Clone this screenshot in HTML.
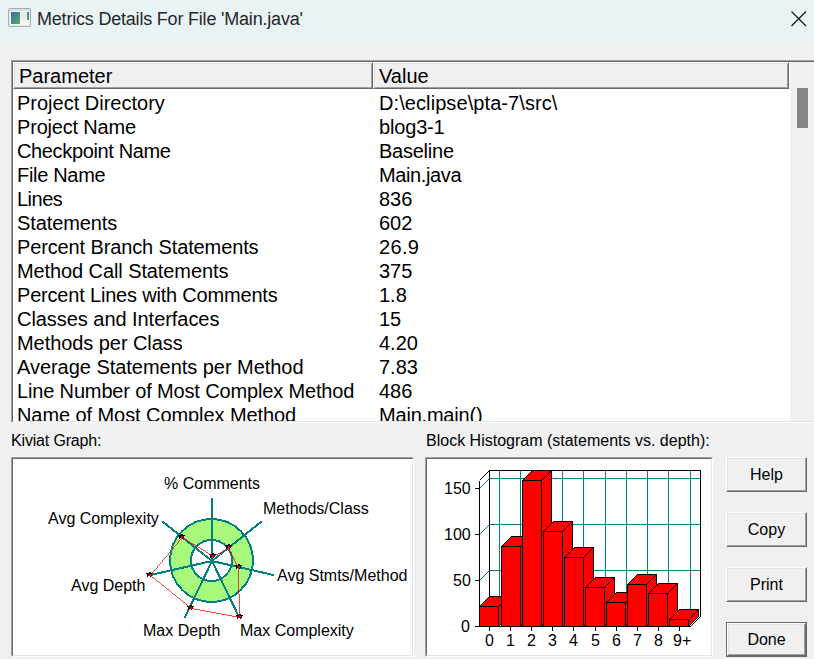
<!DOCTYPE html>
<html><head><meta charset="utf-8">
<style>
html,body{margin:0;padding:0}
body{width:814px;height:659px;overflow:hidden;background:#f0f0f0;position:relative;font-family:"Liberation Sans",sans-serif;color:#000}
.a{position:absolute;white-space:pre}
#title{left:0;top:0;width:814px;height:42px;background:#e9f3f6}
.t20{font-size:20px;line-height:24px}
.t16{font-size:16px;line-height:18px}
.sunk{position:absolute;border:1px solid;border-color:#a0a0a0 #fff #fff #a0a0a0;box-sizing:border-box}
.sunk>.in{position:absolute;left:0;top:0;right:0;bottom:0;border:1px solid;border-color:#696969 #e3e3e3 #e3e3e3 #696969;background:#fff;overflow:hidden}
.btn{position:absolute;box-sizing:border-box;border:1px solid;border-color:#fff #696969 #696969 #fff;background:#f0f0f0}
.btn>.in{position:absolute;left:0;top:0;right:0;bottom:0;border:1px solid;border-color:#e3e3e3 #a0a0a0 #a0a0a0 #e3e3e3}
.btn .lbl{position:absolute;left:0;right:0;text-align:center;font-size:16px;line-height:18px}
.hdr{position:absolute;top:0;height:27px;box-sizing:border-box;border:1px solid;border-color:#fff #696969 #696969 #fff;background:#f0f0f0}
.hdr>.in{position:absolute;left:0;top:0;right:0;bottom:0;border:1px solid;border-color:#e3e3e3 #a0a0a0 #a0a0a0 #e3e3e3}
</style></head><body>
<div id="title" class="a">
  <svg class="a" style="left:0;top:0" width="814" height="42">
    <defs>
      <linearGradient id="ig" x1="0" y1="0" x2="1" y2="1">
        <stop offset="0" stop-color="#3a68b0"/><stop offset="1" stop-color="#55b060"/>
      </linearGradient>
      <linearGradient id="ig2" x1="0" y1="0" x2="0" y2="1">
        <stop offset="0" stop-color="#3b7fc4"/><stop offset="1" stop-color="#3fae5a"/>
      </linearGradient>
    </defs>
    <rect x="8.5" y="8.5" width="22" height="18" rx="1.5" fill="#eeeeee" stroke="#a4abb3"/>
    <rect x="9" y="9" width="21" height="2" fill="#d9dee5"/>
    <rect x="10" y="11" width="19" height="14" fill="#f4f4f4"/>
    <rect x="11" y="12" width="9" height="12" fill="url(#ig)"/>
    <rect x="21" y="12" width="5" height="7" fill="#e8e8e8"/>
    <rect x="27" y="12" width="2" height="8" fill="url(#ig2)"/>
    <path d="M791.5 11.5 L806 26 M806 11.5 L791.5 26" stroke="#1a1a1a" stroke-width="1.3" fill="none"/>
  </svg>
  <div class="a" style="left:37px;top:8px;font-size:18px;line-height:22px;letter-spacing:-0.2px;color:#262626">Metrics Details For File 'Main.java'</div>
</div>

<!-- list box -->
<div class="sunk" style="left:11px;top:60px;width:830px;height:363px">
  <div class="in">
    <div class="hdr" style="left:0;width:360px"><div class="in"></div></div>
    <div class="hdr" style="left:360px;width:416px"><div class="in"></div></div>
    <div class="a t20" style="left:6px;top:2px">Parameter</div>
    <div class="a t20" style="left:366px;top:2px">Value</div>
    <div style="position:absolute;left:777px;top:0;width:60px;height:400px;background:#f0f0f0"></div>
    <div style="position:absolute;left:784px;top:26px;width:11px;height:40px;background:#858585"></div>
    <div class="a t20" style="left:4px;top:29px">Project Directory</div><div class="a t20" style="left:366px;top:29px;letter-spacing:0.085px">D:\eclipse\pta-7\src\</div>
    <div class="a t20" style="left:4px;top:53px;letter-spacing:-0.182px">Project Name</div><div class="a t20" style="left:366px;top:53px;letter-spacing:-0.167px">blog3-1</div>
    <div class="a t20" style="left:4px;top:77px;letter-spacing:-0.357px">Checkpoint Name</div><div class="a t20" style="left:366px;top:77px;letter-spacing:-0.243px">Baseline</div>
    <div class="a t20" style="left:4px;top:101px;letter-spacing:-0.312px">File Name</div><div class="a t20" style="left:366px;top:101px;letter-spacing:-0.375px">Main.java</div>
    <div class="a t20" style="left:4px;top:125px;letter-spacing:-0.500px">Lines</div><div class="a t20" style="left:366px;top:125px">836</div>
    <div class="a t20" style="left:4px;top:149px;letter-spacing:-0.111px">Statements</div><div class="a t20" style="left:366px;top:149px">602</div>
    <div class="a t20" style="left:4px;top:173px;letter-spacing:-0.125px">Percent Branch Statements</div><div class="a t20" style="left:366px;top:173px;letter-spacing:0.333px">26.9</div>
    <div class="a t20" style="left:4px;top:197px;letter-spacing:-0.095px">Method Call Statements</div><div class="a t20" style="left:366px;top:197px">375</div>
    <div class="a t20" style="left:4px;top:221px;letter-spacing:-0.192px">Percent Lines with Comments</div><div class="a t20" style="left:366px;top:221px">1.8</div>
    <div class="a t20" style="left:4px;top:245px;letter-spacing:-0.048px">Classes and Interfaces</div><div class="a t20" style="left:366px;top:245px">15</div>
    <div class="a t20" style="left:4px;top:269px;letter-spacing:-0.062px">Methods per Class</div><div class="a t20" style="left:366px;top:269px">4.20</div>
    <div class="a t20" style="left:4px;top:293px;letter-spacing:-0.036px">Average Statements per Method</div><div class="a t20" style="left:366px;top:293px">7.83</div>
    <div class="a t20" style="left:4px;top:317px;letter-spacing:-0.152px">Line Number of Most Complex Method</div><div class="a t20" style="left:366px;top:317px">486</div>
    <div class="a t20" style="left:4px;top:341px;letter-spacing:-0.077px">Name of Most Complex Method</div><div class="a t20" style="left:366px;top:341px;letter-spacing:-0.200px">Main.main()</div>
  </div>
</div>

<div class="a t16" style="left:11px;top:432px;letter-spacing:-0.17px">Kiviat Graph:</div>
<div class="a t16" style="left:426px;top:432px">Block Histogram (statements vs. depth):</div>

<div class="sunk" style="left:11px;top:457px;width:403px;height:200px"><div class="in"></div></div>
<div class="sunk" style="left:425px;top:457px;width:288px;height:200px"><div class="in"></div></div>

<div class="btn" style="left:726px;top:457px;width:81px;height:35px"><div class="in"></div><div class="lbl" style="top:8px">Help</div></div>
<div class="btn" style="left:726px;top:512px;width:81px;height:35px"><div class="in"></div><div class="lbl" style="top:8px">Copy</div></div>
<div class="btn" style="left:726px;top:567px;width:81px;height:35px"><div class="in"></div><div class="lbl" style="top:8px">Print</div></div>
<div class="a" style="left:726px;top:622px;width:81px;height:35px;box-sizing:border-box;border:1px solid #696969">
  <div class="btn" style="left:0;top:0;width:79px;height:33px"><div class="in"></div><div class="lbl" style="top:7px">Done</div></div>
</div>

<svg id="charts" class="a" style="left:0;top:0" width="814" height="659">
<g shape-rendering="crispEdges">
<circle cx="211.5" cy="560.5" r="41.5" fill="#a8f87c" stroke="#008080" stroke-width="2"/>
<circle cx="211.5" cy="560.5" r="20.5" fill="#fff" stroke="#008080" stroke-width="2"/>
<path d="M212 561L212.0 497.5 M212 561L261.6 521.4 M212 561L273.9 575.1 M212 561L239.6 618.2 M212 561L184.4 618.2 M212 561L150.1 575.1 M212 561L162.4 521.4" stroke="#008080" stroke-width="2" fill="none"/>
<path d="M213 553h1v1h2v1h-1v2h-1v1h-1v-1h-2v1h-1v-1h0v-2h-1v-1h2z" fill="#000"/>
<rect x="212" y="555" width="2" height="2" fill="#f00"/>
<path d="M229 544h1v1h2v1h-1v2h-1v1h-1v-1h-2v1h-1v-1h0v-2h-1v-1h2z" fill="#000"/>
<rect x="228" y="546" width="2" height="2" fill="#f00"/>
<path d="M239 564h1v1h2v1h-1v2h-1v1h-1v-1h-2v1h-1v-1h0v-2h-1v-1h2z" fill="#000"/>
<rect x="238" y="566" width="2" height="2" fill="#f00"/>
<path d="M240 614h1v1h2v1h-1v2h-1v1h-1v-1h-2v1h-1v-1h0v-2h-1v-1h2z" fill="#000"/>
<rect x="239" y="616" width="2" height="2" fill="#f00"/>
<path d="M191 605h1v1h2v1h-1v2h-1v1h-1v-1h-2v1h-1v-1h0v-2h-1v-1h2z" fill="#000"/>
<rect x="190" y="607" width="2" height="2" fill="#f00"/>
<path d="M150 572h1v1h2v1h-1v2h-1v1h-1v-1h-2v1h-1v-1h0v-2h-1v-1h2z" fill="#000"/>
<rect x="149" y="574" width="2" height="2" fill="#f00"/>
<path d="M182 534h1v1h2v1h-1v2h-1v1h-1v-1h-2v1h-1v-1h0v-2h-1v-1h2z" fill="#000"/>
<rect x="181" y="536" width="2" height="2" fill="#f00"/>
<polygon points="212.5,556.5 228.5,547.5 238.5,567.5 239.5,617.5 190.5,608.5 149.5,575.5 181.5,537.5" fill="none" stroke="#f00" stroke-width="0.75"/>
</g>
<g shape-rendering="crispEdges" fill="none">
<path d="M489.5 478.5H700.5" stroke="#008080"/>
<path d="M479.5 488.5L489.5 478.5" stroke="#008080"/>
<path d="M489.5 524.5H700.5" stroke="#008080"/>
<path d="M479.5 534.5L489.5 524.5" stroke="#008080"/>
<path d="M489.5 570.5H700.5" stroke="#008080"/>
<path d="M479.5 580.5L489.5 570.5" stroke="#008080"/>
<path d="M499.5 470.5V616.5" stroke="#008080"/>
<path d="M520.5 470.5V616.5" stroke="#008080"/>
<path d="M541.5 470.5V616.5" stroke="#008080"/>
<path d="M562.5 470.5V616.5" stroke="#008080"/>
<path d="M583.5 470.5V616.5" stroke="#008080"/>
<path d="M605.5 470.5V616.5" stroke="#008080"/>
<path d="M626.5 470.5V616.5" stroke="#008080"/>
<path d="M647.5 470.5V616.5" stroke="#008080"/>
<path d="M668.5 470.5V616.5" stroke="#008080"/>
<path d="M690.5 470.5V616.5" stroke="#008080"/>
<path d="M489.5 470.5H700.5V616.5 M489.5 470.5V616.5 M479.5 480.5L489.5 470.5 M479.5 480.5V626.5 M475 626.5H690.5L700.5 616.5" stroke="#000"/>
<path d="M475 488.5H479.5" stroke="#000"/>
<path d="M475 534.5H479.5" stroke="#000"/>
<path d="M475 580.5H479.5" stroke="#000"/>
<path d="M489.5 626.5V631" stroke="#000"/>
<path d="M510.5 626.5V631" stroke="#000"/>
<path d="M531.5 626.5V631" stroke="#000"/>
<path d="M552.5 626.5V631" stroke="#000"/>
<path d="M573.5 626.5V631" stroke="#000"/>
<path d="M595.5 626.5V631" stroke="#000"/>
<path d="M616.5 626.5V631" stroke="#000"/>
<path d="M637.5 626.5V631" stroke="#000"/>
<path d="M658.5 626.5V631" stroke="#000"/>
<path d="M679.5 626.5V631" stroke="#000"/>
<path d="M479.5 606.5L489.5 596.5H508.5L498.5 606.5Z" fill="#f00" stroke="#000"/>
<path d="M498.5 606.5L508.5 596.5V616.5L498.5 626.5Z" fill="#f00" stroke="#000"/>
<rect x="479.5" y="606.5" width="19" height="20" fill="#f00" stroke="#000"/>
<path d="M501.5 546.5L511.5 536.5H530.5L520.5 546.5Z" fill="#f00" stroke="#000"/>
<path d="M520.5 546.5L530.5 536.5V616.5L520.5 626.5Z" fill="#f00" stroke="#000"/>
<rect x="501.5" y="546.5" width="19" height="80" fill="#f00" stroke="#000"/>
<path d="M522.5 480.5L532.5 470.5H551.5L541.5 480.5Z" fill="#f00" stroke="#000"/>
<path d="M541.5 480.5L551.5 470.5V616.5L541.5 626.5Z" fill="#f00" stroke="#000"/>
<rect x="522.5" y="480.5" width="19" height="146" fill="#f00" stroke="#000"/>
<path d="M543.5 531.5L553.5 521.5H572.5L562.5 531.5Z" fill="#f00" stroke="#000"/>
<path d="M562.5 531.5L572.5 521.5V616.5L562.5 626.5Z" fill="#f00" stroke="#000"/>
<rect x="543.5" y="531.5" width="19" height="95" fill="#f00" stroke="#000"/>
<path d="M564.5 557.5L574.5 547.5H593.5L583.5 557.5Z" fill="#f00" stroke="#000"/>
<path d="M583.5 557.5L593.5 547.5V616.5L583.5 626.5Z" fill="#f00" stroke="#000"/>
<rect x="564.5" y="557.5" width="19" height="69" fill="#f00" stroke="#000"/>
<path d="M585.5 587.5L595.5 577.5H614.5L604.5 587.5Z" fill="#f00" stroke="#000"/>
<path d="M604.5 587.5L614.5 577.5V616.5L604.5 626.5Z" fill="#f00" stroke="#000"/>
<rect x="585.5" y="587.5" width="19" height="39" fill="#f00" stroke="#000"/>
<path d="M606.5 602.5L616.5 592.5H635.5L625.5 602.5Z" fill="#f00" stroke="#000"/>
<path d="M625.5 602.5L635.5 592.5V616.5L625.5 626.5Z" fill="#f00" stroke="#000"/>
<rect x="606.5" y="602.5" width="19" height="24" fill="#f00" stroke="#000"/>
<path d="M627.5 584.5L637.5 574.5H656.5L646.5 584.5Z" fill="#f00" stroke="#000"/>
<path d="M646.5 584.5L656.5 574.5V616.5L646.5 626.5Z" fill="#f00" stroke="#000"/>
<rect x="627.5" y="584.5" width="19" height="42" fill="#f00" stroke="#000"/>
<path d="M648.5 593.5L658.5 583.5H677.5L667.5 593.5Z" fill="#f00" stroke="#000"/>
<path d="M667.5 593.5L677.5 583.5V616.5L667.5 626.5Z" fill="#f00" stroke="#000"/>
<rect x="648.5" y="593.5" width="19" height="33" fill="#f00" stroke="#000"/>
<path d="M669.5 619.5L679.5 609.5H698.5L688.5 619.5Z" fill="#f00" stroke="#000"/>
<path d="M688.5 619.5L698.5 609.5V616.5L688.5 626.5Z" fill="#f00" stroke="#000"/>
<rect x="669.5" y="619.5" width="19" height="7" fill="#f00" stroke="#000"/>
</g>
<g font-family="Liberation Sans" font-size="16" fill="#000">
<text x="164" y="489">% Comments</text>
<text x="263" y="514">Methods/Class</text>
<text x="277" y="581">Avg Stmts/Method</text>
<text x="48" y="524">Avg Complexity</text>
<text x="71" y="591">Avg Depth</text>
<text x="143" y="636">Max Depth</text>
<text x="240" y="636">Max Complexity</text>
<text x="444" y="494">150</text>
<text x="444" y="540">100</text>
<text x="453" y="586">50</text>
<text x="461" y="632">0</text>
<text x="489.5" y="646" text-anchor="middle">0</text>
<text x="510.5" y="646" text-anchor="middle">1</text>
<text x="531.5" y="646" text-anchor="middle">2</text>
<text x="552.5" y="646" text-anchor="middle">3</text>
<text x="573.5" y="646" text-anchor="middle">4</text>
<text x="595.5" y="646" text-anchor="middle">5</text>
<text x="616.5" y="646" text-anchor="middle">6</text>
<text x="637.5" y="646" text-anchor="middle">7</text>
<text x="658.5" y="646" text-anchor="middle">8</text>
<text x="673" y="646">9+</text>
</g>
</svg>
</body></html>
